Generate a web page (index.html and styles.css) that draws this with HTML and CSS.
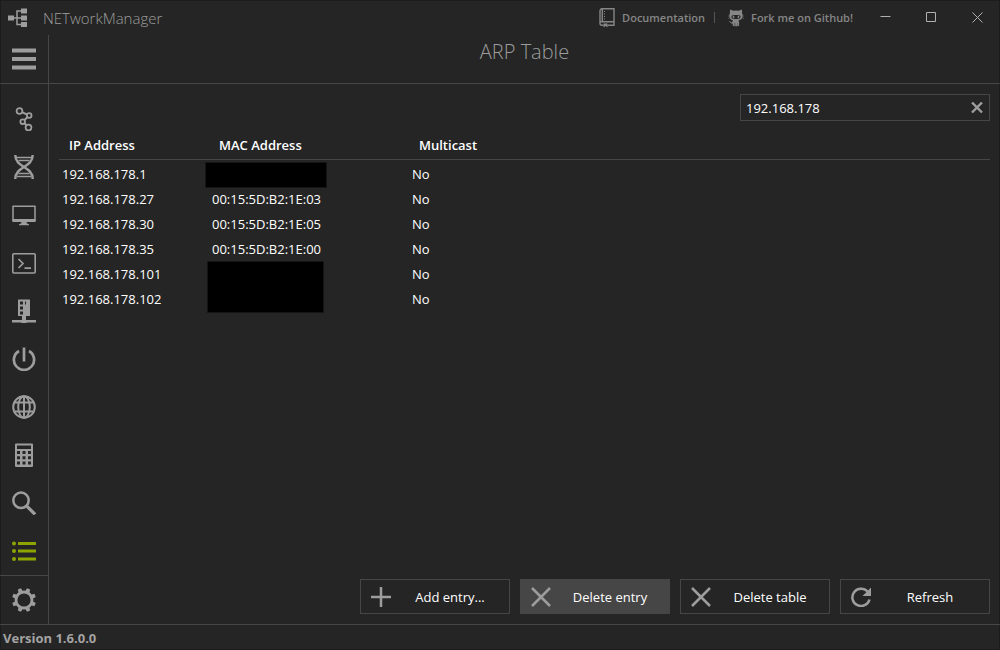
FILE: index.html
```html
<!DOCTYPE html>
<html lang="en">
<head>
<meta charset="utf-8">
<meta name="viewport" content="width=device-width, initial-scale=1">
<title>NETworkManager</title>
<link rel="stylesheet" href="styles.css">
</head>
<body>
<div class="app">
  <header class="titlebar">
    <svg class="logo" width="20" height="20" viewBox="0 0 20 20"><path d="M0 7.500h6v5H0zM13 .500h6v5h-6zM13 7.500h6v5h-6zM13 14h6v5h-6z" fill="currentColor"/><path d="M6 10h7M13 3H9v13.500h4" fill="none" stroke="currentColor" stroke-width="1.500"/></svg>
    <span class="app-name">NETworkManager</span>
    <nav class="links">
      <a class="link" href="#docs">
        <svg width="16" height="20" viewBox="0 0 16 20" fill="none" stroke="currentColor"><path d="M3 .8h12v14.700M3 .8Q1 .8 1 3v12.500q0 1.700 2 1.700h1.500M1.200 13.800h13.800v3.400H8.500M3.300 1v12.500" stroke-width="1.400"/><path d="M5.500 3v9" stroke-dasharray="1 1.500"/><path d="M4.500 15.500h4v4l-2-1.500-2 1.500z" fill="currentColor" stroke="none"/></svg>
        <span>Documentation</span>
      </a>
      <span class="divider"></span>
      <a class="link" href="#github">
        <svg width="16" height="18" viewBox="0 0 16 18"><path fill="currentColor" fill-rule="evenodd" d="M2.200.500 5.300 1.800q2.700-.5 5.400 0L13.800.500q.6 1.800.2 3.200 1.100 1.700.6 4.300-.6 3-4.300 3.400.8.8.8 2v3.300q-.6.800-1.300 0v-2.700h-.3v3q-.8.900-1.500 0v-3h-.2v3q-.7.900-1.500 0v-3H6v2.700q-.7.800-1.300 0v-2q-2 .2-2.600-1.400L.7 12q1.200-.3 1.900.8.600.9 1.600.400.100-1.200.9-1.800Q2 11 1.400 8 1 5.400 2 3.700 1.700 2.300 2.200.5zM5 6.200q-1.600.2-1.600 1.800 0 1.900 2.300 1.900h4.600q2.300 0 2.300-1.900 0-1.600-1.600-1.800-3-.5-6 0z"/><path d="M4.800 7h1.500v2.200H4.800zM9.700 7h1.500v2.200H9.700z" fill="currentColor"/><path d="M0 7h1.500M0 9.500l1.500-.5M14.500 7H16M14.500 9l1.500.500" stroke="currentColor" stroke-width=".5"/></svg>
        <span>Fork me on Github!</span>
      </a>
    </nav>
    <div class="window-controls">
      <button type="button" aria-label="Minimize"><svg width="11" height="11" viewBox="0 0 11 11"><path d="M.5 4.500h10"/></svg></button>
      <button type="button" aria-label="Maximize"><svg width="11" height="11" viewBox="0 0 11 11"><path d="M.5.500h9v9h-9z"/></svg></button>
      <button type="button" aria-label="Close"><svg width="11" height="11" viewBox="0 0 11 11"><path d="m.5.500 10 10m0-10-10 10"/></svg></button>
    </div>
  </header>

  <div class="body">
    <aside class="sidebar">
      <button class="nav-button menu" type="button" aria-label="Menu"><svg width="24" height="24" viewBox="0 0 24 24"><path d="M0 3.500h24M0 12h24M0 20.500h24" stroke="currentColor" stroke-width="4"/></svg></button>
      <nav class="nav-list">
        <button class="nav-button" type="button" aria-label="Traceroute"><svg width="24" height="24" viewBox="0 0 24 24" fill="none" stroke="currentColor" stroke-width="1.800"><circle cx="7.500" cy="4" r="2.900"/><circle cx="17.200" cy="8.500" r="2.300"/><circle cx="10.700" cy="14.700" r="2.300"/><circle cx="16.500" cy="20.500" r="2.900"/><path d="m10.300 5.300 4.800 2.200m.4 2.800-3.100 2.800m.2 3.200 1.900 2" stroke-width="2"/></svg></button>
        <button class="nav-button" type="button" aria-label="DNS Lookup"><svg width="24" height="24" viewBox="0 0 24 24" fill="none" stroke="currentColor"><path d="M3.300 0C3.300 13 20.700 11 20.700 24M20.700 0C20.700 13 3.300 11 3.300 24" stroke-width="2.500"/><path d="M5 2.500h14M6.500 5.500h11M6.500 18.500h11M5 21.500h14" stroke-width="1.600"/></svg></button>
        <button class="nav-button" type="button" aria-label="Remote Desktop"><svg width="24" height="24" viewBox="0 0 24 24"><path d="M1 3.200h22v14.500H1z" fill="none" stroke="currentColor" stroke-width="1.500" stroke-linejoin="round"/><path d="M.5 16h23v3H.5zM9.500 19h5l.5 1.500 2 .7v1H7v-1l2-.7z" fill="currentColor"/></svg></button>
        <button class="nav-button" type="button" aria-label="PuTTY"><svg width="24" height="24" viewBox="0 0 24 24" fill="none" stroke="currentColor"><rect x=".8" y="2.800" width="22.400" height="19.200" rx="1" stroke-width="1.600"/><path d="m6.500 8 4.500 4.500L6.500 17M12.500 17.200h6.500" stroke-width="1.700"/></svg></button>
        <button class="nav-button" type="button" aria-label="SNMP"><svg width="24" height="24" viewBox="0 0 24 24"><path fill="currentColor" fill-rule="evenodd" d="M6.500.5h11q.5 0 .5.500v16H6V1Q6 .5 6.500.5zM8 2.500h3v3H8zm5 0h1v3h-1zM8 7.500h3v3H8zm0 5h3v3H8z"/><path fill="currentColor" d="M10 17h4v4h10v2.500h-8.500q-3.500 1.500-7 0H0V21h10z"/></svg></button>
        <button class="nav-button" type="button" aria-label="Wake on LAN"><svg width="24" height="24" viewBox="0 0 24 24" fill="none" stroke="currentColor" stroke-width="2.700"><path d="M12 .5v14M7 4a10.100 10.100 0 1 0 10 0"/></svg></button>
        <button class="nav-button" type="button" aria-label="HTTP Headers"><svg width="24" height="24" viewBox="0 0 24 24" fill="none" stroke="currentColor" stroke-width="2"><circle cx="12" cy="12" r="10.800"/><ellipse cx="12" cy="12" rx="5.800" ry="10.800"/><path d="M12 1v22M2.500 7.500h19M2.500 16.500h19"/></svg></button>
        <button class="nav-button" type="button" aria-label="Subnet Calculator"><svg width="24" height="24" viewBox="0 0 24 24"><path fill="currentColor" fill-rule="evenodd" d="M4 .5h16q1 0 1 1v21.500q0 1-1 1H4q-1 0-1-1V1.500q0-1 1-1zM5 2.500h14V6H5zM5 8h3v3H5zm5.500 0h3v3h-3zM16 8h3v3h-3zM5 13.200h3v3H5zm5.500 0h3v3h-3zm5.500 0h3v3h-3zM5 18.500h3v3H5zm5.500 0h3v3h-3zm5.500 0h3v3h-3z"/></svg></button>
        <button class="nav-button" type="button" aria-label="Lookup"><svg width="24" height="24" viewBox="0 0 24 24" fill="none" stroke="currentColor"><circle cx="9" cy="9.300" r="7.700" stroke-width="2.500"/><path d="m15 15.300 8 8" stroke-width="3.300"/></svg></button>
        <button class="nav-button active" type="button" aria-label="ARP Table"><svg width="24" height="24" viewBox="0 0 24 24" fill="currentColor"><circle cx="2" cy="4.500" r="2"/><circle cx="2" cy="12" r="2"/><circle cx="2" cy="20" r="2"/><path d="M6 3h18v3H6zM6 10.500h18v3H6zM6 18.500h18v3H6z"/></svg></button>
      </nav>
      <button class="nav-button settings" type="button" aria-label="Settings"><svg width="24" height="24" viewBox="-12 -12 24 24"><circle r="8" fill="none" stroke="currentColor" stroke-width="2.800"/><g fill="currentColor"><path id="tooth" d="m-2.200-8.500.5-3.500h3.400l.5 3.500z" transform="rotate(22.500)"/><use href="#tooth" transform="rotate(45)"/><use href="#tooth" transform="rotate(90)"/><use href="#tooth" transform="rotate(135)"/><use href="#tooth" transform="rotate(180)"/><use href="#tooth" transform="rotate(225)"/><use href="#tooth" transform="rotate(270)"/><use href="#tooth" transform="rotate(315)"/></g></svg></button>
    </aside>

    <main class="content">
      <h1 class="page-title">ARP Table</h1>
      <div class="view">
        <div class="search">
          <input class="search-input" type="text" aria-label="Search" value="192.168.178">
          <button class="search-clear" type="button" aria-label="Clear search"><svg width="12" height="12" viewBox="0 0 12 12"><path d="m1 .5 10 10m0-10-10 10" stroke="currentColor" stroke-width="2.400"/></svg></button>
        </div>
        <table class="arp">
          <colgroup><col class="col-ip"><col class="col-mac"><col></colgroup>
          <thead><tr><th scope="col">IP Address</th><th scope="col">MAC Address</th><th scope="col">Multicast</th></tr></thead>
          <tbody>
            <tr><td>192.168.178.1</td><td><span class="redacted"></span></td><td>No</td></tr>
            <tr><td>192.168.178.27</td><td>00:15:5D:B2:1E:03</td><td>No</td></tr>
            <tr><td>192.168.178.30</td><td>00:15:5D:B2:1E:05</td><td>No</td></tr>
            <tr><td>192.168.178.35</td><td>00:15:5D:B2:1E:00</td><td>No</td></tr>
            <tr><td>192.168.178.101</td><td><span class="redacted redacted-double"></span></td><td>No</td></tr>
            <tr><td>192.168.178.102</td><td></td><td>No</td></tr>
          </tbody>
        </table>
        <div class="actions">
          <button class="action" type="button"><svg width="20" height="20" viewBox="0 0 20 20"><path d="M10 0v20M0 10h20"/></svg><span>Add entry...</span></button>
          <button class="action selected" type="button"><svg width="20" height="20" viewBox="0 0 20 20"><path d="m1 1 18 18m0-18L1 19"/></svg><span>Delete entry</span></button>
          <button class="action" type="button"><svg width="20" height="20" viewBox="0 0 20 20"><path d="m1 1 18 18m0-18L1 19"/></svg><span>Delete table</span></button>
          <button class="action" type="button"><svg width="20" height="20" viewBox="0 0 20 20"><path d="M16.500 4.500A8.700 8.700 0 1 0 18.500 12.500"/><path d="M20 .5V9h-8.500z" fill="currentColor" stroke="none"/></svg><span>Refresh</span></button>
        </div>
      </div>
    </main>
  </div>

  <footer class="status">Version 1.6.0.0</footer>
</div>
</body>
</html>
```
FILE: styles.css
```css
* { box-sizing: border-box; }

body {
  margin: 0;
  background: #252525;
  color: #fff;
  font: 13px/18px "Open Sans", "Noto Sans", sans-serif;
}

button {
  margin: 0;
  padding: 0;
  border: 0;
  background: none;
  color: inherit;
  font: inherit;
}

svg { display: block; flex: none; }

.app {
  display: flex;
  flex-direction: column;
  min-height: 100vh;
  box-shadow: inset 0 0 0 1px #1c1c1c;
}

.titlebar {
  display: flex;
  align-items: center;
  height: 35px;
  padding-left: 8px;
  color: #9d9d9d;
}

.app-name {
  margin-left: 15px;
  font-size: 15px;
  font-weight: 300;
}

.links {
  display: flex;
  align-items: center;
  margin-left: auto;
  color: #868686;
  font-size: 11px;
  font-weight: 600;
}

.link {
  display: flex;
  align-items: center;
  gap: 7px;
  color: inherit;
  text-decoration: none;
}

.divider {
  width: 1px;
  height: 11px;
  margin: 0 13px 0 9px;
  background: #555;
}

.window-controls {
  display: flex;
  margin-left: 9px;
}

.window-controls button {
  display: grid;
  place-items: center;
  width: 46px;
  height: 34px;
}

.window-controls path { fill: none; stroke: #b0b0b0; }

.body {
  display: flex;
  flex: 1;
}

.sidebar {
  display: flex;
  flex-direction: column;
  width: 49px;
  border-right: 1px solid #464646;
  color: #9d9d9d;
}

.nav-button {
  display: grid;
  place-items: center;
  width: 100%;
  height: 48px;
}

.menu {
  height: 49px;
  border-bottom: 1px solid #464646;
}

.nav-list {
  flex: 1;
  padding-top: 11px;
}

.active { color: #8ea500; }

.settings {
  height: 49px;
  border-top: 1px solid #464646;
}

.content {
  display: flex;
  flex: 1;
  flex-direction: column;
}

.page-title {
  height: 49px;
  margin: 0;
  border-bottom: 1px solid #464646;
  color: #9d9d9d;
  font-size: 20px;
  font-weight: 300;
  line-height: 34px;
  text-align: center;
}

.view {
  display: flex;
  flex: 1;
  flex-direction: column;
  padding: 10px;
}

.search {
  display: flex;
  align-self: flex-end;
  width: 250px;
  height: 27px;
  border: 1px solid #464646;
}

.search-input {
  flex: 1;
  min-width: 0;
  padding: 0 5px;
  border: 0;
  outline: 0;
  background: none;
  color: inherit;
  font: inherit;
}

.search-clear {
  display: grid;
  place-items: center;
  width: 24px;
  color: #9d9d9d;
}

.arp {
  width: 100%;
  margin-top: 10px;
  border-collapse: separate;
  border-spacing: 0;
  table-layout: fixed;
}

.col-ip { width: 150px; }
.col-mac { width: 200px; }

.arp th {
  height: 29px;
  padding: 0 10px;
  border-bottom: 1px solid #464646;
  font-weight: 600;
  text-align: left;
}

.arp tbody::before {
  content: "";
  display: block;
  height: 1px;
}

.arp td {
  position: relative;
  height: 25px;
  padding: 0 3px;
}

.redacted {
  position: absolute;
  top: 1px;
  left: -4px;
  width: 122px;
  height: 26px;
  border: 1px solid #151515;
  background: #000;
}

.redacted-double {
  top: 0;
  left: -2px;
  width: 117px;
  height: 52px;
}

.actions {
  display: flex;
  justify-content: flex-end;
  gap: 10px;
  margin-top: auto;
}

.action {
  display: flex;
  align-items: center;
  width: 150px;
  height: 35px;
  padding-left: 10px;
  border: 1px solid #464646;
}

.action span { flex: 1; }

.action svg {
  fill: none;
  stroke: currentColor;
  stroke-width: 2.500;
  color: #9d9d9d;
}

.selected { background: #464646; }

.status {
  height: 26px;
  padding: 4px 3px;
  border-top: 1px solid #464646;
  color: #a3a3a3;
  font-weight: 700;
}
```
